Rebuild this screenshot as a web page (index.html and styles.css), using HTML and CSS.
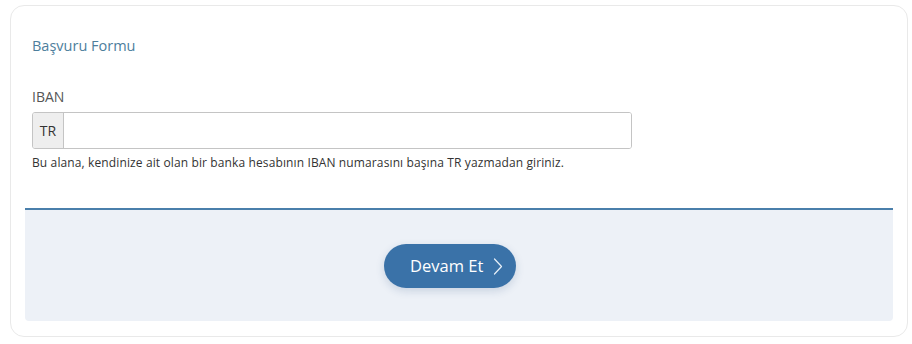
FILE: index.html
```html
<!DOCTYPE html>
<html lang="tr">
<head>
<meta charset="utf-8">
<title>Başvuru Formu</title>
<link rel="stylesheet" href="styles.css">
</head>
<body>
<div class="card">
  <div class="form-body">
    <h2 class="title">Başvuru Formu</h2>
    <label class="label" for="iban">IBAN</label>
    <div class="input-group">
      <span class="addon">TR</span>
      <input id="iban" class="input" type="text">
    </div>
    <p class="help">Bu alana, kendinize ait olan bir banka hesabının IBAN numarasını başına TR yazmadan giriniz.</p>
  </div>
  <div class="footer">
    <button class="btn" type="button"><span class="btn-text">Devam Et</span>
      <svg class="chev" width="10" height="17" viewBox="0 0 10 17"><path d="M1.5 1 L8.5 8.5 L1.5 16" fill="none" stroke="#e8f0f8" stroke-width="1.2" stroke-linecap="round" stroke-linejoin="round"/></svg>
    </button>
  </div>
</div>
</body>
</html>
```

FILE: styles.css
```css
* { box-sizing: border-box; }
html, body { margin: 0; padding: 0; background: #fff; }
body { font-family: "Open Sans", "Noto Sans", sans-serif; color: #333; }

.card {
  margin: 5px 4px 0 10px;
  height: 332px;
  border: 1px solid #e9e9e9;
  border-radius: 14px;
  padding: 0 14px 15px;
  display: flex;
  flex-direction: column;
}

.form-body {
  padding: 0 7px;
  height: 202px;
}

.title {
  margin: 0;
  padding-top: 30px;
  font-size: 14.5px;
  font-weight: 400;
  line-height: 20px;
  color: #4d7e9c;
}

.label {
  display: block;
  margin-top: 31px;
  font-size: 14px;
  line-height: 20px;
  color: #555;
}

.input-group {
  display: flex;
  width: 600px;
  height: 37px;
  margin-top: 5px;
  border: 1px solid #c4c4c4;
  border-radius: 3px;
  overflow: hidden;
}

.addon {
  width: 31px;
  background: #eee;
  border-right: 1px solid #c4c4c4;
  display: flex;
  align-items: center;
  justify-content: center;
  font-size: 14px;
  color: #333;
}

.input {
  flex: 1;
  border: 0;
  outline: none;
  font: inherit;
}

.help {
  margin: 6px 0 0;
  font-size: 12px;
  letter-spacing: 0.12px;
  line-height: 16px;
  color: #333;
}

.footer {
  flex: 1;
  border-top: 2px solid #4a7fab;
  background: #edf1f7;
  border-radius: 0 0 4px 4px;
  display: flex;
  align-items: center;
  justify-content: center;
}

.btn {
  margin-right: 18px;
  width: 132px;
  height: 44px;
  border: 0;
  border-radius: 22px;
  background: #3a72a8;
  color: #fff;
  font-family: "Open Sans", "Noto Sans", sans-serif;
  font-size: 16.5px;
  display: flex;
  align-items: center;
  justify-content: flex-start;
  gap: 10px;
  padding: 0 0 0 26px;
  box-shadow: 0 3px 8px rgba(40, 80, 130, 0.18);
}

.btn-text { line-height: 20px; }
.chev { display: block; margin-top: 1px; }
```
